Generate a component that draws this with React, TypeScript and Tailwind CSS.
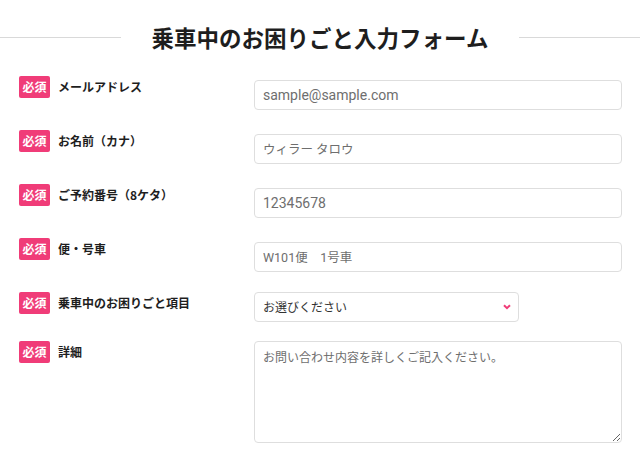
import React from "react";

const font = { fontFamily: '"Noto Sans CJK JP", "Noto Sans", sans-serif' };

function Badge() {
  return (
    <span className="flex h-[22px] w-[31px] shrink-0 items-center justify-center rounded-[2px] bg-[#f03c78] text-[12px] font-bold leading-none text-white">
      必須
    </span>
  );
}

function Label({ text }: { text: string }) {
  return (
    <div className="flex w-[235px] shrink-0 items-center gap-[8px]">
      <Badge />
      <span className="text-[12px] font-bold leading-[22px] text-[#1e1e1e]">{text}</span>
    </div>
  );
}

const inputCls =
  "h-[30px] w-[368px] rounded-[4px] border border-[#dedede] bg-white px-[8px] text-[#333] placeholder:text-[#6e6e6e] outline-none font-['Roboto','Noto_Sans_CJK_JP',sans-serif]";

export default function App() {
  const rows = [
    { label: "メールアドレス", ph: "sample@sample.com", latin: true },
    { label: "お名前（カナ）", ph: "ウィラー タロウ", latin: false },
    { label: "ご予約番号（8ケタ）", ph: "12345678", latin: true },
    { label: "便・号車", ph: "W101便　1号車", latin: false },
  ];
  return (
    <div className="min-h-[459px] w-[640px] bg-white" style={font}>
      <div className="flex items-center pt-[21px]">
        <div className="h-px flex-1 bg-[#d9d9d9]" />
        <h1 className="px-[31px] text-[22.5px] font-bold leading-[32px] text-[#1e1e1e]">
          乗車中のお困りごと入力フォーム
        </h1>
        <div className="h-px flex-1 bg-[#d9d9d9]" />
      </div>
      <div className="flex flex-col pl-[19px] pt-[23px]">
        {rows.map((r) => (
          <div key={r.label} className="mb-[20px] flex items-start">
            <Label text={r.label} />
            <input
              className={
                r.latin
                  ? `${inputCls} mt-[4px] text-[14px]`
                  : `${inputCls} mt-[4px] text-[12.5px]`
              }
              placeholder={r.ph}
            />
          </div>
        ))}
        <div className="mb-[19px] flex items-start">
          <Label text="乗車中のお困りごと項目" />
          <div className="relative">
            <select className="h-[30px] w-[265px] appearance-none rounded-[4px] border border-[#dedede] bg-white px-[8px] text-[12px] text-[#333] outline-none">
              <option>お選びください</option>
            </select>
            <svg
              className="pointer-events-none absolute right-[8px] top-[12px]"
              width="8"
              height="6"
              viewBox="0 0 8 6"
            >
              <path d="M1 1.2 L4 4.2 L7 1.2" fill="none" stroke="#f03c78" strokeWidth="2" />
            </svg>
          </div>
        </div>
        <div className="flex items-start">
          <Label text="詳細" />
          <textarea
            className="h-[102px] w-[368px] rounded-[4px] border border-[#dedede] bg-white px-[8px] py-[5px] text-[12px] leading-[20px] text-[#333] placeholder:text-[#6e6e6e] outline-none"
            placeholder="お問い合わせ内容を詳しくご記入ください。"
          />
        </div>
      </div>
    </div>
  );
}
